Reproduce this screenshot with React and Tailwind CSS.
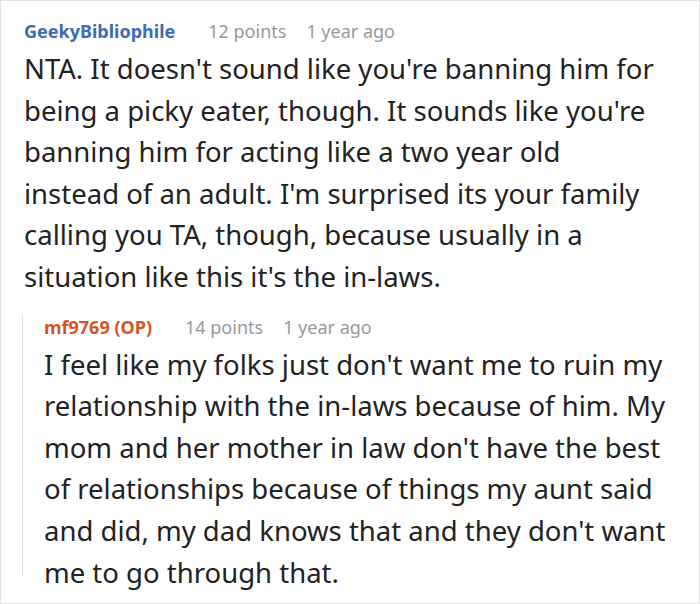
const COMMENT = {
  user: 'GeekyBibliophile',
  points: '12 points',
  time: '1 year ago',
  lines: [
    "NTA. It doesn't sound like you're banning him for",
    "being a picky eater, though. It sounds like you're",
    'banning him for acting like a two year old',
    "instead of an adult. I'm surprised its your family",
    'calling you TA, though, because usually in a',
    "situation like this it's the in-laws.",
  ],
}

const REPLY = {
  user: 'mf9769 (OP)',
  points: '14 points',
  time: '1 year ago',
  lines: [
    "I feel like my folks just don't want me to ruin my",
    'relationship with the in-laws because of him. My',
    "mom and her mother in law don't have the best",
    'of relationships because of things my aunt said',
    "and did, my dad knows that and they don't want",
    'me to go through that.',
  ],
}

function Meta({ user, points, time, op }) {
  return (
    <div className="flex items-center text-[18px] leading-[24px] whitespace-nowrap">
      <span className={`font-bold ${op ? 'text-[#d5541f]' : 'text-[#3d6bb5]'}`}>{user}</span>
      <span className="ml-[33px] text-[#999999]">{points}</span>
      <span className="ml-[20px] text-[#999999]">{time}</span>
    </div>
  )
}

function Body({ lines }) {
  return (
    <p className="text-[27.5px] leading-[41.6px] text-[#222222]">
      {lines.map((l) => (
        <span key={l} className="block whitespace-nowrap">{l}</span>
      ))}
    </p>
  )
}

export default function App() {
  return (
    <div
      className="w-[700px] h-[604px] bg-white border border-[#e2e2e2] overflow-hidden"
      style={{ fontFamily: '"Noto Sans", "Open Sans", sans-serif' }}
    >
      <div className="pl-[23px] pr-[10px] pt-[18px]">
        <Meta {...COMMENT} />
        <div className="mt-[5px]">
          <Body lines={COMMENT.lines} />
        </div>

        {/* reply, border starts a bit below the meta line */}
        <div className="ml-[-2px] mt-[27px] h-[260px] border-l border-[#dcdcdc] pl-[21px]">
          <div className="-mt-[10px]">
            <Meta {...REPLY} op />
          </div>
          <div className="mt-[5px]">
            <Body lines={REPLY.lines} />
          </div>
        </div>
      </div>
    </div>
  )
}
